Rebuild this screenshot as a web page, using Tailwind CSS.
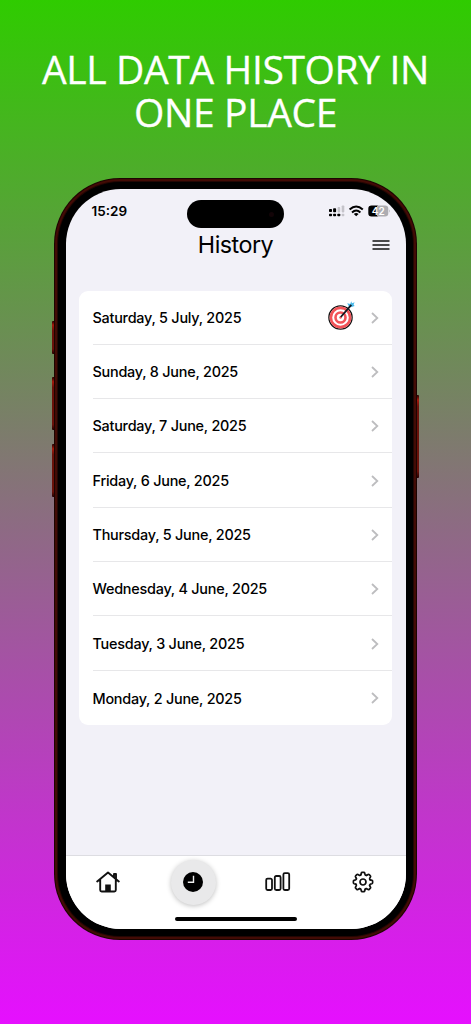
<!DOCTYPE html>
<html lang="en">
<head>
<meta charset="utf-8">
<title>History</title>
<script src="https://cdn.jsdelivr.net/npm/@tailwindcss/browser@4"></script>
</head>
<body class="w-[471px] h-[1024px] overflow-hidden bg-linear-[180deg,#2fcc00,#e60fff] font-['Inter',sans-serif] text-black">
<h1 class="pt-[47px] h-[178px] text-center text-white font-['Open_Sans',sans-serif] text-[39px] leading-[43px] tracking-[-0.36px] [-webkit-text-stroke:0.3px_white]"><span class="whitespace-nowrap">ALL DATA HISTORY IN</span><br>ONE PLACE</h1>

<div class="relative ml-[54px] w-[363px] h-[762px]">
  <!-- side buttons -->
  <div class="absolute -left-[2px] top-[143px] w-[4px] h-[33px] rounded-l-[1px] bg-linear-[180deg,#200,#a51a0c_12%,#6a120a_30%,#6a120a_85%,#200]"></div>
  <div class="absolute -left-[2px] top-[199px] w-[4px] h-[53px] rounded-l-[1px] bg-linear-[180deg,#200,#a51a0c_9%,#6a120a_20%,#6a120a_90%,#200]"></div>
  <div class="absolute -left-[2px] top-[266px] w-[4px] h-[53px] rounded-l-[1px] bg-linear-[180deg,#200,#a51a0c_9%,#6a120a_20%,#6a120a_90%,#200]"></div>
  <div class="absolute -right-[2px] top-[217px] w-[4px] h-[83px] rounded-r-[1px] bg-linear-[180deg,#200,#a51a0c_6%,#6a120a_14%,#6a120a_92%,#200]"></div>

  <div class="relative size-full rounded-[66px] bg-[#1c0502] p-[1px]">
  <div class="size-full rounded-[65px] bg-[#430b05] p-[2px]">
  <div class="size-full rounded-[63px] bg-[#220603] p-[1px]">
  <div class="size-full rounded-[62px] bg-black p-[7px] pl-[7.5px]">
    <div class="flex flex-col w-[340px] h-[740px] rounded-[55px] overflow-hidden bg-[#f2f1f8]">
      <!-- status bar -->
      <div class="flex h-[42px] pt-[11px] pl-[26px]">
        <div class="w-[95.5px] pt-[2.5px] text-[13.5px] leading-[16px] font-semibold">15:29</div>
        <div class="w-[97px] h-[28px] rounded-full bg-black flex items-center justify-end pr-[10px]"><div class="size-[5px] rounded-full bg-[#120407]"></div></div>
        <svg class="ml-[44.5px] mt-[4.5px]" width="62" height="13" viewBox="0 0 62 13">
          <g fill="#000"><rect y="4" width="3" height="3" rx=".8"/><rect x="4.1" y="3.2" width="3" height="4" rx=".8"/><rect y="8.7" width="3" height="2.6" rx=".8"/><rect x="4.1" y="8.7" width="3" height="2.6" rx=".8"/><rect x="8.3" y="8.7" width="3" height="2.6" rx=".8"/></g>
          <g fill="#c5c4ca"><rect x="8.6" y="2" width="2.6" height="5.4" rx=".8"/><rect x="12.7" y=".5" width="2.6" height="6.9" rx=".8"/><rect x="12.7" y="8.7" width="2.6" height="2.6" rx=".8"/></g>
          <g fill="none" stroke="#000" stroke-width="2"><path d="M20.6 4.6Q27.2-1.6 33.8 4.6"/><path d="M23 7.4Q27.2 3.6 31.4 7.4"/></g><path d="M24.8 8.9Q27.2 7.2 29.6 8.9L27.2 11.3Z"/>
          <path d="M42.6.5H49V11.5H42.6A3.3 3.3 0 0 1 39.3 8.2V3.8A3.3 3.3 0 0 1 42.6.5Z"/><path fill="#adacb1" d="M48 .5H56A3.3 3.3 0 0 1 59.3 3.8V8.2A3.3 3.3 0 0 1 56 11.5H48ZM60 4.3Q61.6 6 60 7.7Z"/>
          <text x="49.3" y="9.7" text-anchor="middle" fill="#fff" font-size="10" font-weight="600" font-family="Inter">42</text>
        </svg>
      </div>
      <!-- title -->
      <div class="relative flex h-[59px] justify-center">
        <h2 class="text-[23.3px] leading-[28px] tracking-[-0.5px]">History</h2>
        <svg class="absolute right-[16px] top-[9px]" width="18" height="10" viewBox="0 0 18 10" stroke="#111" stroke-width="1.3"><path d="M.5 1H17.5M.5 5H17.5M.5 9H17.5"/></svg>
      </div>
      <!-- day list -->
      <ul class="mt-[.5px] ml-[13.5px] w-[313px] h-[434.5px] rounded-[9px] bg-white pl-[13.5px] text-[14.4px] font-medium tracking-[-0.23px] grid grid-rows-8 divide-y divide-[#e7e7e9]">
        <li class="flex items-center justify-between pt-[2px] pr-[13px]"><span>Saturday, 5 July, 2025</span>
          <span class="flex items-center gap-[16px]">
          <svg class="-mt-[5px]" width="27" height="29" viewBox="0 0 27 29"><circle cx="12.5" cy="16.5" r="11.6" fill="#fff" stroke="#111" stroke-width="1.3"/><circle cx="12.5" cy="16.5" r="9.6" fill="none" stroke="#f25358" stroke-width="2.6"/><circle cx="12.5" cy="16.5" r="5" fill="none" stroke="#f25358" stroke-width="2.6"/><circle cx="12.5" cy="16.5" r="1.2" fill="#f25358"/><path d="M21.4 6.2 19.2 2.2 22.2 3 23.2.2 24 2.2 26.6 1.2 25.6 3.4 26.6 5 24.4 5.8Z" fill="#48b9ea"/><path d="M12.8 16 23.3 3.8" stroke="#101820" stroke-width="1.8"/></svg>
          <svg width="8" height="12" viewBox="0 0 8 12" fill="none" stroke="#bdbdbf" stroke-width="1.8"><path d="M1 1 6.3 6 1 11"/></svg></span></li>
        <li class="flex items-center justify-between pt-px pr-[13px]"><span>Sunday, 8 June, 2025</span><svg width="8" height="12" viewBox="0 0 8 12" fill="none" stroke="#bdbdbf" stroke-width="1.8"><path d="M1 1 6.3 6 1 11"/></svg></li>
        <li class="flex items-center justify-between pt-px pr-[13px]"><span>Saturday, 7 June, 2025</span><svg width="8" height="12" viewBox="0 0 8 12" fill="none" stroke="#bdbdbf" stroke-width="1.8"><path d="M1 1 6.3 6 1 11"/></svg></li>
        <li class="flex items-center justify-between pt-px pr-[13px]"><span>Friday, 6 June, 2025</span><svg width="8" height="12" viewBox="0 0 8 12" fill="none" stroke="#bdbdbf" stroke-width="1.8"><path d="M1 1 6.3 6 1 11"/></svg></li>
        <li class="flex items-center justify-between pt-px pr-[13px]"><span>Thursday, 5 June, 2025</span><svg width="8" height="12" viewBox="0 0 8 12" fill="none" stroke="#bdbdbf" stroke-width="1.8"><path d="M1 1 6.3 6 1 11"/></svg></li>
        <li class="flex items-center justify-between pt-px pr-[13px]"><span>Wednesday, 4 June, 2025</span><svg width="8" height="12" viewBox="0 0 8 12" fill="none" stroke="#bdbdbf" stroke-width="1.8"><path d="M1 1 6.3 6 1 11"/></svg></li>
        <li class="flex items-center justify-between pt-px pr-[13px]"><span>Tuesday, 3 June, 2025</span><svg width="8" height="12" viewBox="0 0 8 12" fill="none" stroke="#bdbdbf" stroke-width="1.8"><path d="M1 1 6.3 6 1 11"/></svg></li>
        <li class="flex items-center justify-between pt-px pr-[13px]"><span>Monday, 2 June, 2025</span><svg width="8" height="12" viewBox="0 0 8 12" fill="none" stroke="#bdbdbf" stroke-width="1.8"><path d="M1 1 6.3 6 1 11"/></svg></li>
      </ul>
      <!-- tab bar -->
      <nav class="mt-auto h-[74px] border-t border-[#dddde2] bg-white">
        <div class="grid grid-cols-4 h-[52px] items-center justify-items-center">
          <svg width="24" height="22" viewBox="0 0 24 22" fill="none" stroke="#111" stroke-width="1.9" stroke-linecap="round" stroke-linejoin="round"><path d="M1.2 10.5 12 1.5 22.8 10.5M4.2 8.5V19Q4.2 20.5 5.7 20.5H18.3Q19.8 20.5 19.8 19V8.5M18 6V3H20V7.8"/><path d="M9.2 20.5V13.5H14.8V20.5Z" fill="#111" stroke="none"/></svg>
          <div class="size-[45px] rounded-full bg-[#e9e9ea] flex items-center justify-center shadow-[0_1px_5px_rgba(0,0,0,.25)]">
            <svg width="20" height="20" viewBox="0 0 20 20"><circle cx="10" cy="10" r="10"/><path d="M10.5 3.8V10.3H4.8" fill="none" stroke="#eee" stroke-width="1.4"/></svg>
          </div>
          <svg width="26" height="20" viewBox="0 0 26 20" fill="none" stroke="#111" stroke-width="1.8"><rect x="1.2" y="6.7" width="5.8" height="11.3" rx="1.4"/><rect x="9.8" y="4" width="5.8" height="14" rx="1.4"/><rect x="18.4" y="1.2" width="5.8" height="16.8" rx="1.4"/></svg>
          <svg width="22" height="22" viewBox="-11 -11 22 22" fill="none" stroke="#111" stroke-width="1.7" stroke-linejoin="round" stroke-linecap="round"><circle r="3"/>
            <g id="tooth"><path d="M-2.1-7.3-1.7-8.9Q-1.5-9.6-.8-9.6H.8Q1.5-9.6 1.7-8.9L2.1-7.3Q2.76-6.3 3.68-6.65"/></g>
            <use href="#tooth" transform="rotate(45)"/><use href="#tooth" transform="rotate(90)"/><use href="#tooth" transform="rotate(135)"/><use href="#tooth" transform="rotate(180)"/><use href="#tooth" transform="rotate(225)"/><use href="#tooth" transform="rotate(270)"/><use href="#tooth" transform="rotate(315)"/></svg>
        </div>
        <div class="mx-auto mt-[9px] w-[122px] h-[4px] rounded-full bg-black"></div>
      </nav>
    </div>
  </div></div></div></div>
</div>
</body>
</html>
